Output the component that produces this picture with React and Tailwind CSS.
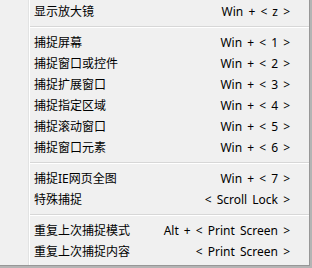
const items = [
  { label: "显示放大镜", key: "Win + < z >" },
  "sep",
  { label: "捕捉屏幕", key: "Win + < 1 >" },
  { label: "捕捉窗口或控件", key: "Win + < 2 >" },
  { label: "捕捉扩展窗口", key: "Win + < 3 >" },
  { label: "捕捉指定区域", key: "Win + < 4 >" },
  { label: "捕捉滚动窗口", key: "Win + < 5 >" },
  { label: "捕捉窗口元素", key: "Win + < 6 >" },
  "sep",
  { label: "捕捉IE网页全图", key: "Win + < 7 >" },
  { label: "特殊捕捉", key: "< Scroll Lock >" },
  "sep",
  { label: "重复上次捕捉模式", key: "Alt + < Print Screen >" },
  { label: "重复上次捕捉内容", key: "< Print Screen >" },
];

export default function App() {
  return (
    <div className="w-[312px] h-[268px] bg-[#b4b4b4] overflow-hidden">
      <div
        className="flex w-[310px] h-[266px] bg-[#f0f0f0] border-r border-b border-[#979797] text-[12px] text-black"
        style={{ fontFamily: '"Noto Sans", "Noto Sans CJK SC", sans-serif' }}
      >
        {/* gutter */}
        <div className="w-[29px] shrink-0 border-r border-[#e2e3e3]" />
        <div className="w-px shrink-0 bg-white" />

        <div className="flex-1 flex flex-col pt-[1px]">
          {items.map((it, i) =>
            it === "sep" ? (
              <div key={i} className="h-[10px] flex flex-col justify-center">
                <div className="h-px bg-[#d7d7d7]" />
                <div className="h-px bg-white" />
              </div>
            ) : (
              <div key={i} className="h-[21px] flex items-center justify-between pl-[4px] pr-[19px]">
                <span className="leading-none">{it.label}</span>
                <span className="leading-none [word-spacing:2px]">{it.key}</span>
              </div>
            )
          )}
        </div>
      </div>
    </div>
  );
}
